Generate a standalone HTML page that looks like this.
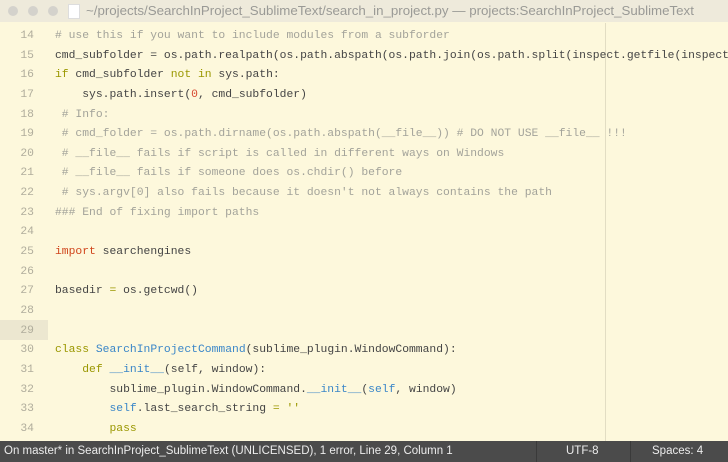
<!DOCTYPE html>
<html><head><meta charset="utf-8"><style>
body{margin:0;width:728px;height:462px;overflow:hidden;background:#fdf8dc;font-family:"Liberation Mono",monospace;position:relative}
#title{position:absolute;left:0;top:0;width:728px;height:22px;background:#eeeadb;color:#9a9a96;font:13.3px "Liberation Sans",sans-serif;line-height:22px;white-space:nowrap}
.dot{position:absolute;top:6px;width:10px;height:10px;border-radius:50%;background:#d4d2cc}
#code{position:absolute;left:0;top:27px;width:728px}
.l{height:19.65px;line-height:19.65px;font-size:11.35px;white-space:pre;position:relative;color:#444}
.n{display:inline-block;width:34px;text-align:right;color:#b0ad9c;margin-right:21px}
.c{color:#a3a39a}.k{color:#9a9700}.f{color:#3a86c8}.r{color:#d64830}.i{color:#d0451c}
#ruler{position:absolute;left:605px;top:23px;width:1px;height:418px;background:#e2ddc3}
#hl{position:absolute;left:0;top:320px;width:48px;height:20px;background:#ece7d0}
#status{position:absolute;left:0;top:441px;width:728px;height:21px;background:#4b4b4b;color:#ececec;font:11.5px "Liberation Sans",sans-serif;line-height:21px;white-space:nowrap}
</style></head><body>
<div id="title"><span class="dot" style="left:8px"></span><span class="dot" style="left:28px"></span><span class="dot" style="left:48px"></span><span style="position:absolute;left:68px;top:4px;width:10px;height:13px;background:#fff;border:1px solid #ddd"></span><span style="position:absolute;left:86px">~/projects/SearchInProject_SublimeText/search_in_project.py — projects:SearchInProject_SublimeText</span></div>
<div id="hl"></div>
<div id="ruler"></div>
<div id="code">
<div class="l"><span class="n">14</span><span class="c"># use this if you want to include modules from a subforder</span></div>
<div class="l"><span class="n">15</span>cmd_subfolder = os.path.realpath(os.path.abspath(os.path.join(os.path.split(inspect.getfile(inspect</div>
<div class="l"><span class="n">16</span><span class="k">if</span> cmd_subfolder <span class="k">not in</span> sys.path:</div>
<div class="l"><span class="n">17</span>    sys.path.insert(<span class="r">0</span>, cmd_subfolder)</div>
<div class="l"><span class="n">18</span><span class="c"> # Info:</span></div>
<div class="l"><span class="n">19</span><span class="c"> # cmd_folder = os.path.dirname(os.path.abspath(__file__)) # DO NOT USE __file__ !!!</span></div>
<div class="l"><span class="n">20</span><span class="c"> # __file__ fails if script is called in different ways on Windows</span></div>
<div class="l"><span class="n">21</span><span class="c"> # __file__ fails if someone does os.chdir() before</span></div>
<div class="l"><span class="n">22</span><span class="c"> # sys.argv[0] also fails because it doesn't not always contains the path</span></div>
<div class="l"><span class="n">23</span><span class="c">### End of fixing import paths</span></div>
<div class="l"><span class="n">24</span></div>
<div class="l"><span class="n">25</span><span class="i">import</span> searchengines</div>
<div class="l"><span class="n">26</span></div>
<div class="l"><span class="n">27</span>basedir <span class="k">=</span> os.getcwd()</div>
<div class="l"><span class="n">28</span></div>
<div class="l"><span class="n">29</span></div>
<div class="l"><span class="n">30</span><span class="k">class</span> <span class="f">SearchInProjectCommand</span>(sublime_plugin.WindowCommand):</div>
<div class="l"><span class="n">31</span>    <span class="k">def</span> <span class="f">__init__</span>(self, window):</div>
<div class="l"><span class="n">32</span>        sublime_plugin.WindowCommand.<span class="f">__init__</span>(<span class="f">self</span>, window)</div>
<div class="l"><span class="n">33</span>        <span class="f">self</span>.last_search_string <span class="k">=</span> <span class="k">''</span></div>
<div class="l"><span class="n">34</span>        <span class="k">pass</span></div>
</div>
<div id="status"><span style="position:absolute;left:4px">On master* in SearchInProject_SublimeText (UNLICENSED), 1 error, Line 29, Column 1</span><span style="position:absolute;left:536px;width:1px;height:21px;background:#3a3a3a"></span><span style="position:absolute;left:566px">UTF-8</span><span style="position:absolute;left:630px;width:1px;height:21px;background:#3a3a3a"></span><span style="position:absolute;left:652px">Spaces: 4</span></div>
</body></html>
